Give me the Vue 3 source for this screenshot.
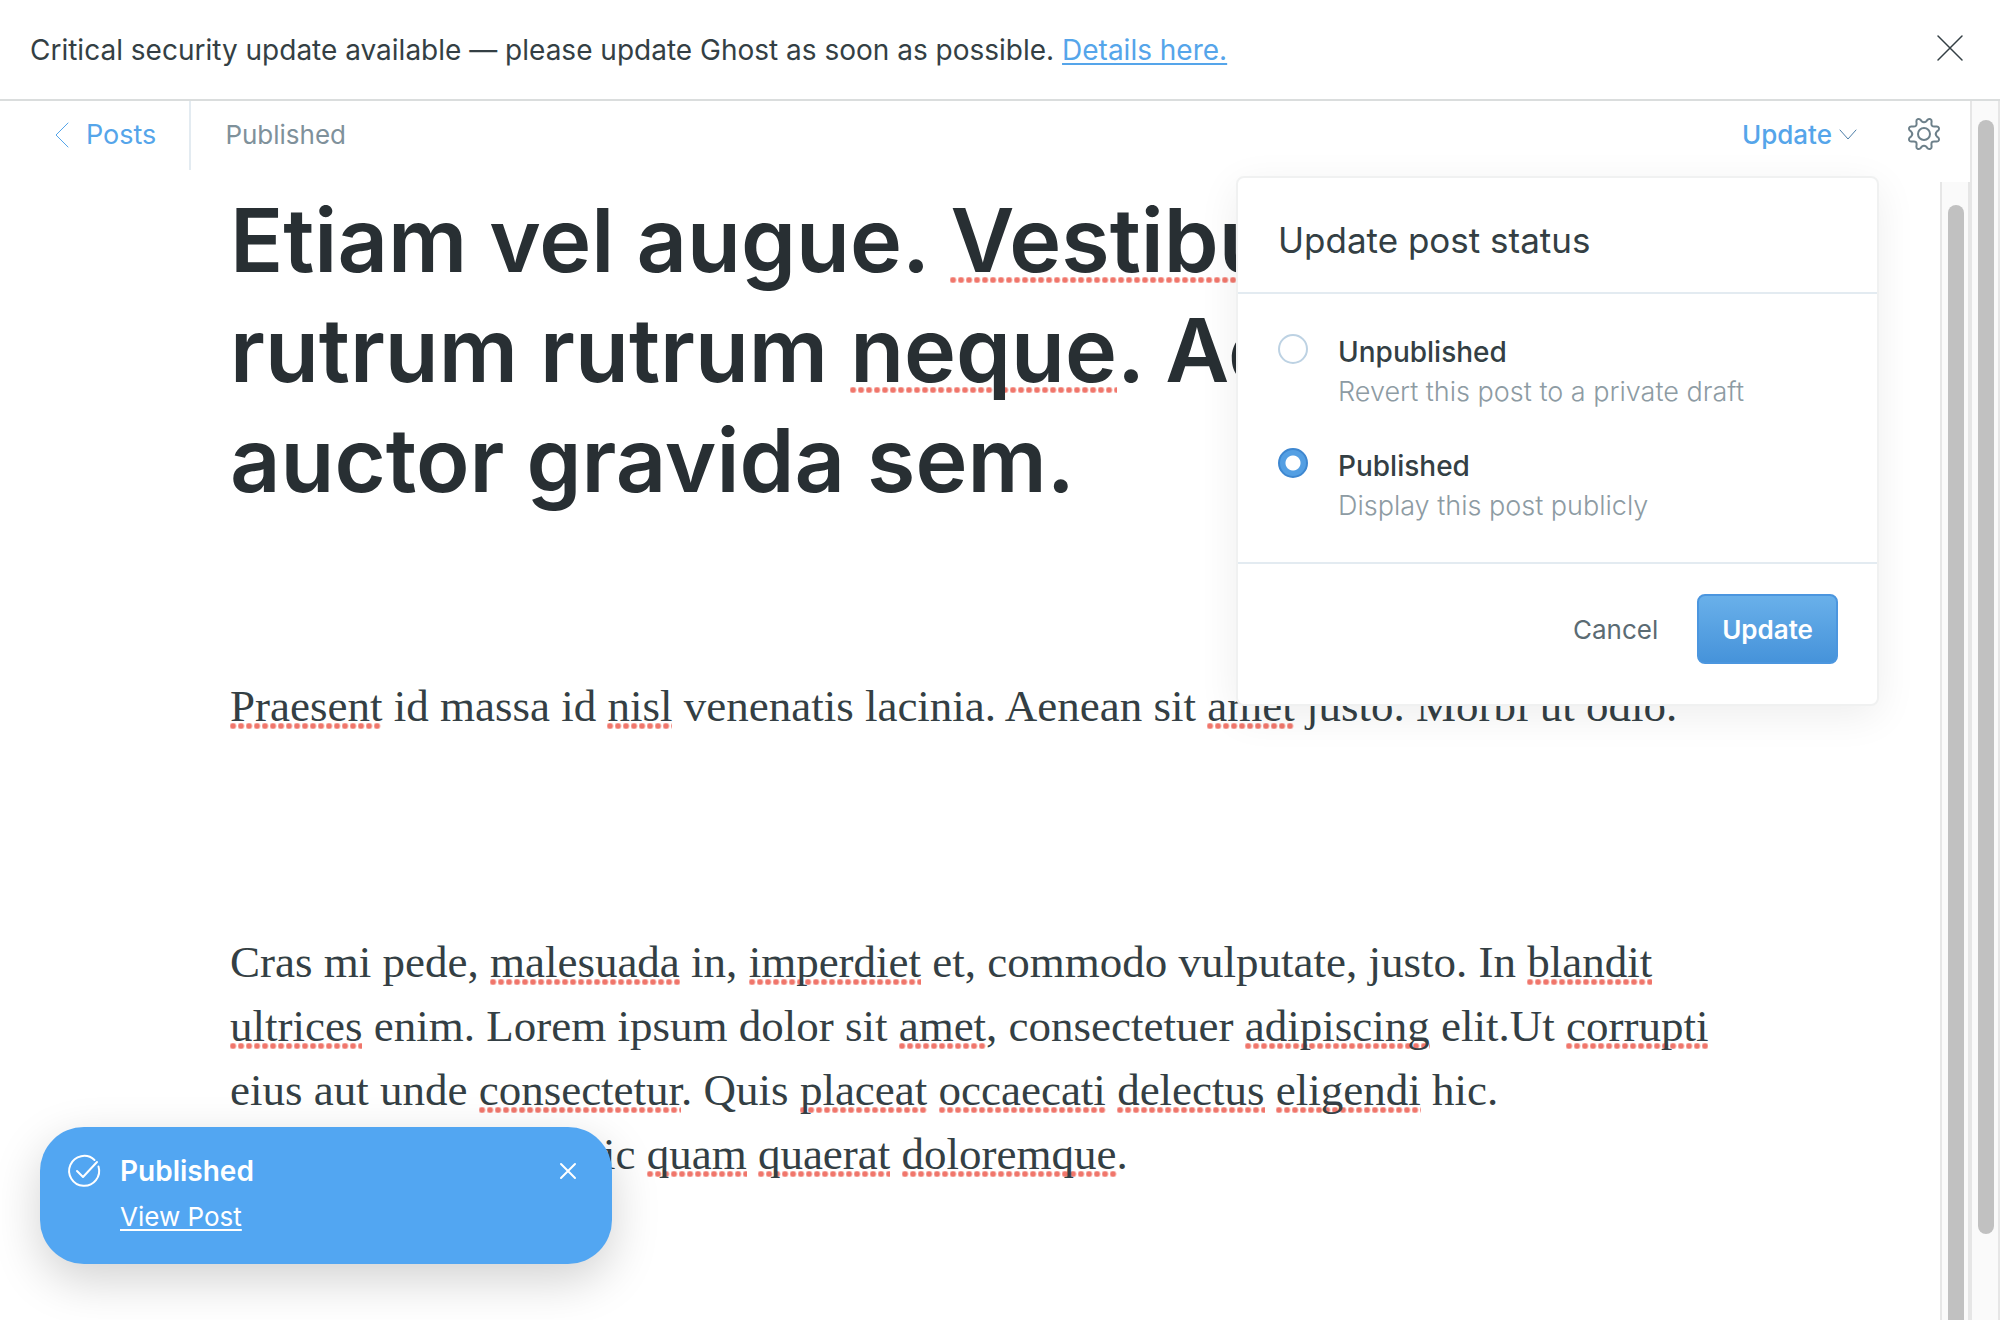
<script setup>
import { ref } from 'vue'

const status = ref('published')
const options = [
  { value: 'unpublished', label: 'Unpublished', hint: 'Revert this post to a private draft' },
  { value: 'published', label: 'Published', hint: 'Display this post publicly' },
]

// Words in square brackets are flagged by the spell checker.
const split = (line) =>
  line
    .split(/(\[[^\]]+\])/)
    .filter(Boolean)
    .map((part) => ({ flagged: part[0] === '[', text: part.replace(/[[\]]/g, '') }))

const title = [
  'Etiam vel augue. [Vestibulum]',
  'rutrum rutrum [neque]. Aenean',
  'auctor gravida sem.',
].map(split)

const paragraphs = [
  ['[Praesent] id massa id [nisl] venenatis lacinia. Aenean sit [amet] justo. Morbi ut odio.'],
  [
    'Cras mi pede, [malesuada] in, [imperdiet] et, commodo vulputate, justo. In [blandit]',
    '[ultrices] enim. Lorem ipsum dolor sit [amet], consectetuer [adipiscing] elit.Ut [corrupti]',
    'eius aut unde [consectetur]. Quis [placeat] [occaecati] [delectus] [eligendi] hic.',
    'Voluptatem omnis, hic [quam] [quaerat] [doloremque].',
  ],
].map((lines) => lines.map(split))
</script>

<template>
  <div class="app">
    <aside class="banner">
      <p class="banner-text">
        Critical security update available — please update Ghost as soon as possible.
        <a href="#details">Details here.</a>
      </p>
      <button class="icon-button" type="button" aria-label="Dismiss">
        <svg class="cross" width="24" height="24" viewBox="0 0 24 24"><path d="M0 0L24 24M24 0L0 24" /></svg>
      </button>
    </aside>

    <div class="body">
      <main class="editor">
        <header class="toolbar">
          <a class="back" href="#posts">
            <svg width="14" height="24" viewBox="0 0 14 24"><path d="M13 0L1 12L13 24" /></svg>
            Posts
          </a>
          <span class="state">Published</span>
          <div class="actions">
            <button class="update-trigger" type="button">
              Update
              <svg width="16" height="10" viewBox="0 0 16 10"><path d="M0 0L8 9L16 0" /></svg>
            </button>
            <button class="icon-button gear" type="button" aria-label="Settings">
              <svg width="32" height="32" viewBox="0 0 32 32">
                <circle cx="16" cy="16" r="6" />
                <path d="M13.600 3.200Q16 5.400 18.400 3.200L19.800 1.500Q21 .6 22.400 1.200Q23.700 1.800 23.600 3.300L23.400 5.500Q23.200 8.700 26.500 8.600L28.700 8.400Q30.200 8.300 30.800 9.600Q31.400 11 30.500 12.200L28.800 13.600Q26.600 16 28.800 18.400L30.500 19.800Q31.400 21 30.800 22.400Q30.200 23.700 28.700 23.600L26.500 23.400Q23.200 23.200 23.400 26.500L23.600 28.700Q23.700 30.200 22.400 30.800Q21 31.400 19.800 30.500L18.400 28.800Q16 26.600 13.600 28.800L12.200 30.500Q11 31.400 9.600 30.800Q8.300 30.200 8.400 28.700L8.600 26.500Q8.700 23.200 5.500 23.400L3.300 23.600Q1.800 23.700 1.200 22.400Q.6 21 1.500 19.800L3.200 18.400Q5.400 16 3.200 13.600L1.500 12.200Q.6 11 1.200 9.600Q1.800 8.300 3.300 8.400L5.500 8.600Q8.700 8.700 8.600 5.500L8.400 3.300Q8.300 1.800 9.600 1.200Q11 .6 12.200 1.500Z" />
              </svg>
            </button>
          </div>

          <form class="popover" @submit.prevent>
            <h2 class="popover-title">Update post status</h2>
            <div class="options">
              <label v-for="o in options" :key="o.value" class="option">
                <input v-model="status" type="radio" name="status" :value="o.value" />
                <span class="option-text">
                  <span class="option-label">{{ o.label }}</span>
                  <span class="option-hint">{{ o.hint }}</span>
                </span>
              </label>
            </div>
            <footer class="popover-footer">
              <button class="cancel" type="button">Cancel</button>
              <button class="submit" type="submit">Update</button>
            </footer>
          </form>
        </header>

        <div class="scroll">
          <article class="post">
            <h1>
              <template v-for="(line, i) in title" :key="i">
                <br v-if="i" /><span v-for="(p, j) in line" :key="j" :class="{ flagged: p.flagged }">{{ p.text }}</span>
              </template>
            </h1>
            <p v-for="(lines, n) in paragraphs" :key="n">
              <template v-for="(line, i) in lines" :key="i">
                <br v-if="i" /><span v-for="(p, j) in line" :key="j" :class="{ flagged: p.flagged }">{{ p.text }}</span>
              </template>
            </p>
          </article>
          <div class="track inner"><div class="thumb"></div></div>
        </div>
      </main>
      <div class="track outer"><div class="thumb"></div></div>
    </div>

    <section class="toast" role="status">
      <svg class="check" width="34" height="34" viewBox="0 0 34 34">
        <path d="M27.500 6A15 15 0 1 0 31.500 12.500M10 17L16 23L30 8" />
      </svg>
      <div class="toast-text">
        <strong>Published</strong>
        <a href="#post">View Post</a>
      </div>
      <button class="icon-button" type="button" aria-label="Close">
        <svg width="16" height="16" viewBox="0 0 16 16"><path d="M1 1L15 15M15 1L1 15" /></svg>
      </button>
    </section>
  </div>
</template>

<style>
body {
  margin: 0;
}
</style>

<style scoped>
.app,
.app * {
  box-sizing: border-box;
}
.app {
  display: flex;
  flex-direction: column;
  height: 100vh;
  overflow: hidden;
  background: #fff;
  color: #343f44;
  font-family: Inter, "Liberation Sans", sans-serif;
  font-size: 26px;
  line-height: 32px;
}
button {
  padding: 0;
  border: 0;
  background: none;
  color: inherit;
  font: inherit;
  cursor: pointer;
}
svg {
  display: block;
  overflow: visible;
  fill: none;
  stroke: currentColor;
  stroke-width: 2;
  stroke-linecap: round;
  stroke-linejoin: round;
}
.cross {
  stroke-width: 1.5;
}
.banner {
  display: flex;
  flex: none;
  align-items: center;
  justify-content: space-between;
  height: 101px;
  padding: 0 38px 4px 30px;
  border-bottom: 2px solid #dadddd;
}
.banner-text {
  margin: 0;
  padding-top: 4px;
  font-size: 28px;
}
.banner-text a {
  color: #55a5ea;
  text-decoration-thickness: 2px;
  text-underline-offset: 3px;
}
.body {
  display: flex;
  flex: 1;
  min-height: 0;
}
.editor {
  display: flex;
  flex: 1;
  flex-direction: column;
  min-width: 0;
}
.toolbar {
  position: relative;
  z-index: 2;
  display: flex;
  flex: none;
  align-items: flex-start;
  height: 81px;
}
.back {
  display: flex;
  align-items: center;
  gap: 17px;
  height: 69px;
  padding: 0 33px 2px 55px;
  border-right: 2px solid #e3ebf1;
  color: #55a5ea;
  font-size: 27px;
  text-decoration: none;
}
.back svg {
  stroke-width: 1;
}
.state {
  padding: 18px 34px;
  color: #7f919b;
}
.actions {
  display: flex;
  align-items: flex-start;
  gap: 52px;
  margin-left: auto;
  padding: 17px 30px 0 0;
}
.update-trigger {
  display: flex;
  align-items: center;
  gap: 8px;
  padding-top: 1px;
  color: #55a5ea;
  font-weight: 500;
}
.update-trigger svg {
  color: #4d7ea8;
  stroke-width: 1;
}
.gear {
  color: #6d808a;
}
.popover {
  position: absolute;
  top: 75px;
  right: 91px;
  width: 643px;
  border: 2px solid #f0f1f1;
  border-radius: 8px;
  background: #fff;
  box-shadow: 0 10px 40px rgba(0, 0, 0, 0.07);
}
.popover-title {
  margin: 0;
  padding: 42px 40px 32px;
  border-bottom: 2px solid #e3ebf1;
  font-size: 35px;
  font-weight: 400;
  line-height: 40px;
}
.options {
  display: flex;
  flex-direction: column;
  gap: 34px;
  padding: 38px 40px 36px;
  border-bottom: 2px solid #e3ebf1;
}
.option {
  display: flex;
  gap: 30px;
}
.option input {
  flex: none;
  width: 30px;
  height: 30px;
  margin: 2px 0 0;
  border: 2px solid #bdd2e3;
  border-radius: 50%;
  appearance: none;
}
.option input:checked {
  border-color: #3e87d0;
  background: radial-gradient(circle, #fff 7px, #549fe3 8px);
}
.option-text {
  display: flex;
  flex-direction: column;
}
.option-label {
  font-size: 28px;
  font-weight: 500;
  line-height: 40px;
}
.option-hint {
  color: #8d9ba3;
  font-size: 27px;
  font-weight: 300;
  line-height: 40px;
}
.popover-footer {
  display: flex;
  align-items: center;
  justify-content: flex-end;
  gap: 39px;
  padding: 30px 39px 40px;
}
.cancel {
  padding-top: 2px;
  color: #5b6b73;
}
.submit {
  height: 70px;
  padding: 2px 23px 0;
  border: 2px solid #4b96df;
  border-radius: 8px;
  background: linear-gradient(#69b0ea, #4693da);
  color: #fff;
  font-weight: 600;
}
.scroll {
  display: flex;
  flex: 1;
  min-height: 0;
  overflow: hidden;
}
.post {
  flex: 1;
  padding: 3px 200px 0 230px;
  font-family: "Liberation Serif", serif;
  white-space: nowrap;
}
.post h1 {
  margin: 0 0 159px;
  color: #282f33;
  font-family: Inter, "Liberation Sans", sans-serif;
  font-size: 88px;
  font-weight: 600;
  line-height: 110px;
}
.post p {
  margin: 0 0 192px;
  font-size: 45px;
  line-height: 64px;
}
.flagged {
  background: radial-gradient(circle at 3px 3px, #f0766b 2px, transparent 4px) left bottom 2px / 8px 6px repeat-x;
}
.post h1 .flagged {
  background-position: left bottom 10px;
}
.track {
  display: flex;
  flex: none;
  width: 30px;
  border: solid #e6e6e6;
  border-width: 0 2px;
  background: #fafafa;
}
.inner {
  padding: 23px 4px 0 6px;
}
.outer {
  padding: 19px 4px 86px 6px;
}
.thumb {
  width: 16px;
  border-radius: 8px;
  background: #c1c1c1;
}
.inner .thumb {
  border-radius: 8px 8px 0 0;
}
.toast {
  position: absolute;
  z-index: 3;
  bottom: 56px;
  left: 40px;
  display: flex;
  align-items: flex-start;
  width: 572px;
  padding: 27px 36px 29px 27px;
  border-radius: 44px;
  background: #52a6f2;
  box-shadow: 0 16px 48px rgba(0, 0, 0, 0.18);
  color: #fff;
}
.toast-text {
  display: flex;
  flex: 1;
  flex-direction: column;
  align-items: flex-start;
  gap: 11px;
  padding-left: 19px;
}
.toast-text strong {
  font-size: 28px;
  font-weight: 600;
  line-height: 34px;
}
.toast-text a {
  color: #fff;
  line-height: 36px;
  text-decoration-thickness: 2px;
  text-underline-offset: 3px;
}
.toast .icon-button {
  margin-top: 9px;
}
</style>
